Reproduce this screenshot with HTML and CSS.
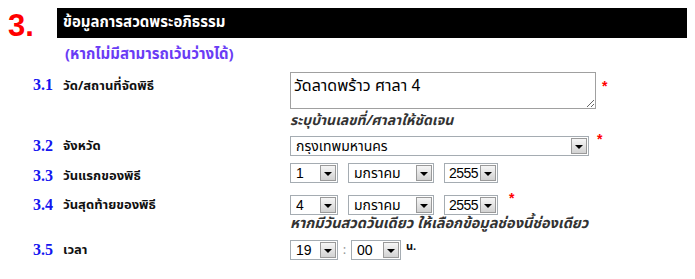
FILE: index.html
```html
<!DOCTYPE html>
<html lang="th">
<head>
    <meta charset="UTF-8">
    <title>ข้อมูลการสวดพระอภิธรรม</title>
    <link rel="stylesheet" href="styles.css">
</head>
<body>

    <div class="section-head">
        <span class="section-no">3.</span>
        <h2 class="section-title">ข้อมูลการสวดพระอภิธรรม</h2>
    </div>
    <p class="section-note">(หากไม่มีสามารถเว้นว่างได้)</p>

    <div class="form">
        <!-- 3.1 -->
        <div class="row row-place">
            <span class="num">3.1</span>
            <span class="label">วัด/สถานที่จัดพิธี</span>
            <div class="field">
                <textarea class="place">วัดลาดพร้าว ศาลา 4</textarea>
                <span class="req">*</span>
            </div>
        </div>
        <p class="hint">ระบุบ้านเลขที่/ศาลาให้ชัดเจน</p>

        <!-- 3.2 -->
        <div class="row row-province">
            <span class="num">3.2</span>
            <span class="label">จังหวัด</span>
            <div class="field">
                <span class="sel w-province">
                    <select><option>กรุงเทพมหานคร</option></select>
                    <span class="arrow"></span>
                </span>
                <span class="req">*</span>
            </div>
        </div>

        <!-- 3.3 -->
        <div class="row row-first">
            <span class="num">3.3</span>
            <span class="label">วันแรกของพิธี</span>
            <div class="field">
                <span class="sel w-day">
                    <select><option>1</option></select>
                    <span class="arrow"></span>
                </span>
                <span class="sel w-month">
                    <select><option>มกราคม</option></select>
                    <span class="arrow"></span>
                </span>
                <span class="sel w-year">
                    <select><option>2555</option></select>
                    <span class="arrow"></span>
                </span>
            </div>
        </div>

        <!-- 3.4 -->
        <div class="row row-last">
            <span class="num">3.4</span>
            <span class="label">วันสุดท้ายของพิธี</span>
            <div class="field">
                <span class="sel w-day">
                    <select><option>4</option></select>
                    <span class="arrow"></span>
                </span>
                <span class="sel w-month">
                    <select><option>มกราคม</option></select>
                    <span class="arrow"></span>
                </span>
                <span class="sel w-year">
                    <select><option>2555</option></select>
                    <span class="arrow"></span>
                </span>
                <span class="req">*</span>
            </div>
        </div>
        <p class="hint hint-tight">หากมีวันสวดวันเดียว ให้เลือกข้อมูลช่องนี้ช่องเดียว</p>

        <!-- 3.5 -->
        <div class="row row-time">
            <span class="num">3.5</span>
            <span class="label">เวลา</span>
            <div class="field">
                <span class="sel w-hour">
                    <select><option>19</option></select>
                    <span class="arrow"></span>
                </span>
                <span class="colon">:</span>
                <span class="sel w-min">
                    <select><option>00</option></select>
                    <span class="arrow"></span>
                </span>
                <span class="unit">น.</span>
            </div>
        </div>
    </div>

</body>
</html>
```

FILE: styles.css
```css
* {
    margin: 0;
    padding: 0;
    box-sizing: border-box;
}

body {
    font-family: Tahoma, "Noto Sans Thai", "Noto Sans", sans-serif;
    background: #FFFFFF;
    color: #111;
    width: 695px;
    height: 279px;
    overflow: hidden;
    padding: 8px 8px 0 8px;
}

/* Section header */
.section-head {
    display: flex;
    align-items: center;
    height: 30px;
}

.section-no {
    width: 49px;
    font-family: "Liberation Sans", Arial, sans-serif;
    font-weight: bold;
    font-size: 31px;
    color: #FF0000;
    line-height: 30px;
    padding-top: 6px;
}

.section-title {
    flex: 1;
    height: 30px;
    max-width: 630px;
    background: #000;
    color: #fff;
    font-size: 15px;
    font-weight: bold;
    line-height: 30px;
    padding-left: 6px;
}

.section-note {
    margin: 7px 0 0 57px;
    font-size: 15px;
    font-weight: bold;
    color: #6A3CF5;
    line-height: 20px;
}

/* Form rows */
.row {
    display: flex;
    align-items: center;
}

.num {
    width: 30px;
    margin-left: 25px;
    font-family: "Liberation Serif", "Times New Roman", serif;
    font-weight: bold;
    font-size: 16px;
    color: #1515F0;
}

.label {
    width: 227px;
    font-size: 13px;
    font-weight: bold;
}

.field {
    display: flex;
    align-items: center;
    gap: 10px;
}

.row-place {
    align-items: flex-start;
    margin-top: 7px;
}

.row-place .num,
.row-place .label {
    padding-top: 4px;
}

.row-place .field {
    align-items: flex-start;
    gap: 6px;
}

.place {
    width: 306px;
    height: 37px;
    border: 1px solid #A0A0A0;
    font-family: "Liberation Sans", Tahoma, "Noto Sans Thai", sans-serif;
    font-size: 16px;
    color: #000;
    padding: 1px 3px;
    resize: vertical;
    overflow: hidden;
}

.req {
    color: #FF0000;
    font-family: "Liberation Sans", Arial, sans-serif;
    font-size: 14px;
    font-weight: bold;
    align-self: flex-start;
    line-height: 14px;
    margin-top: 6px;
}

.row-place .req {
    margin-top: 7px;
}

.row-province .req {
    margin-top: -4px;
    margin-left: -2px;
}

.row-last .req {
    margin-top: -4px;
    margin-left: 1px;
}

.hint {
    margin-left: 282px;
    font-size: 14px;
    font-weight: bold;
    font-style: italic;
    color: #333;
    line-height: 18px;
    margin-top: 3px;
}

.hint-tight {
    margin-top: 0;
    font-size: 14.5px;
}

.row-province {
    margin-top: 6px;
}

.row-first {
    margin-top: 7px;
}

.row-first .num,
.row-first .label {
    position: relative;
    top: 3px;
}

.row-last {
    margin-top: 12px;
}

.row-time {
    margin-top: 7px;
}

/* Select boxes */
.sel {
    display: inline-flex;
    align-items: center;
    height: 20px;
    border: 1px solid #A5ACB2;
    background: #fff;
}

.sel select {
    appearance: none;
    -webkit-appearance: none;
    border: none;
    outline: none;
    background: transparent;
    flex: 1;
    min-width: 0;
    height: 18px;
    font-family: "Liberation Sans", Tahoma, "Noto Sans Thai", sans-serif;
    font-size: 14px;
    color: #000;
    padding: 0 0 0 5px;
}

.arrow {
    width: 16px;
    height: 16px;
    margin-right: 1px;
    border: 1px solid #9A9A9A;
    background: linear-gradient(#F6F6F6, #D2D2D2);
    display: flex;
    align-items: center;
    justify-content: center;
}

.arrow::after {
    content: "";
    border-left: 4px solid transparent;
    border-right: 4px solid transparent;
    border-top: 4px solid #000;
    margin-top: 1px;
}

.w-province { width: 299px; }
.w-day { width: 48px; }
.w-month { width: 86px; }
.w-year { width: 54px; }
.w-hour { width: 48px; }
.w-min { width: 50px; }

.w-year select {
    padding-left: 4px;
    letter-spacing: -0.5px;
}

.row-time .field {
    gap: 0;
}

.colon {
    width: 13px;
    text-align: center;
    color: #999;
    font-size: 13px;
}

.unit {
    align-self: flex-start;
    margin-left: 5px;
    font-size: 11px;
    font-weight: bold;
    line-height: 12px;
    margin-top: 1px;
}
```
